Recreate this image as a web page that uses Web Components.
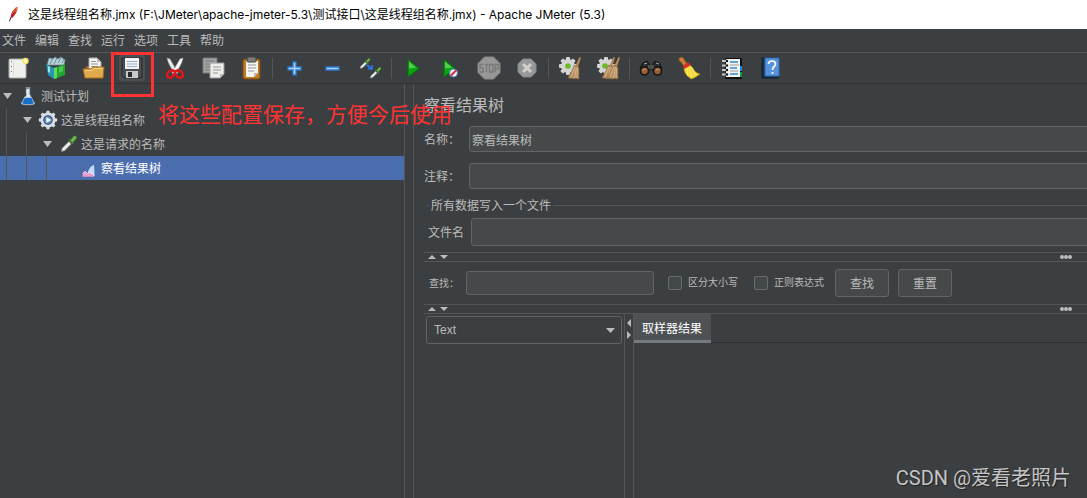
<!DOCTYPE html>
<html lang="zh-CN">
<head>
<meta charset="utf-8">
<title>Apache JMeter (5.3)</title>
<style>
html,body{margin:0;height:100%;overflow:hidden}
body{font:12px/16px "Liberation Sans","Noto Sans CJK SC",sans-serif;color:#bbb;background:#3c3f41}
</style>
</head>
<body>
<jm-app></jm-app>
<script>
const define=(name,html)=>customElements.define(name,class extends HTMLElement{
  connectedCallback(){
    if(this.shadowRoot)return;
    const root=this.attachShadow({mode:"open"});
    const t=document.createElement("template");
    t.innerHTML="<style>*{box-sizing:border-box}:host([hidden]){display:none}</style>"+(typeof html==="function"?html(this):html);
    root.append(t.content.cloneNode(true));
  }
});

const gear=(c,r,teeth)=>Array.from({length:teeth},(_,i)=>`<rect x="${c-2}" y="${c-r}" width="4" height="${r}" rx="1" transform="rotate(${i*360/teeth} ${c} ${c})"/>`).join("");
const broom=(x)=>`<g transform="translate(${x} 0)"><path d="M20.500 1l1.500.7-3 9-2.500-1z" fill="#b98a54"/><path d="M15.500 9l4 1.500c1 4 0 8 .5 12.500-4-1-8 .500-11-1.500 3-3 4-8 6.500-12.500z" fill="#b28d62" stroke="#8d6a40" stroke-width=".6"/><path d="M16 11l-4 10M17.500 11l-2 11M18.500 12l-.5 10" stroke="#dfc294" stroke-width=".8"/></g>`;
const dropper=`<path d="M4 21l1-4 8-8 3 3-8 8z" fill="#e4e6e2" stroke="#7c807a" stroke-width=".8"/><path d="M5.500 18.500l8-8" stroke="#fff"/><path d="M12 7l6 6 1.500-2-5.500-5.500z" fill="#3f7a2a"/><path d="M14.500 8l4-5c2-2 5 0 3.500 2.500l-4.500 5z" fill="#6fb552" stroke="#37711f" stroke-width=".7"/>`;
const ICONS={
 feather:`<path d="M5 23l3-7" stroke="#39303a" stroke-width="1.500"/><path d="M7 17c0-6 4-13 10-16 1 4-2 12-8 17z" fill="#d8232e"/><path d="M9 12c2-5 4-8 8-11 0 3-1 5-2 7z" fill="#e98a32"/><path d="M8 17L15 4" stroke="#7a1746"/>`,
 new:`<rect x="3" y="3" width="17" height="19" rx="1" fill="#efefed" stroke="#aaa"/><path d="M5.500 5v15" stroke="#777" stroke-dasharray="1 4"/><path d="M7.500 6v14" stroke="#d8d8d8"/><circle cx="19.500" cy="5" r="3.200" fill="#f3e66a"/><circle cx="19.500" cy="5" r="1.700" fill="#fffbd0"/>`,
 templates:`<path d="M3 9l2-7 4 1 2-2 3 2 3-2 4 3-1 5z" fill="#c3ced3" stroke="#668b99" stroke-width=".7"/><path d="M6 8l3-6M10 8l3-6M14 7l3-5M18 7l2-4" stroke="#4c9eb2"/><path d="M2 8l8 4v11l-6-4z" fill="#2297b3"/><path d="M4 10l2 1v6l-2-1z" fill="#9edfe9"/><path d="M10 12l11-4v11l-11 4z" fill="#22a632"/><path d="M10 12l3-1v11l-3 1z" fill="#62d85c"/><path d="M15 11l4-1v5l-4 2z" fill="#46ca4c"/>`,
 open:`<path d="M3 12l2-2h12l4 1v11H3z" fill="#99671d"/><path d="M7 13V2h8l4 4v8z" fill="#f3f3f1" stroke="#aaa"/><path d="M9 5.500h5M9 8h7M9 10.500h7" stroke="#999"/><path d="M15 2v4h4" fill="#bbb"/><path d="M1 13h8l2-2h11l-1 11H3z" fill="#e0ab4e" stroke="#a66d1c"/><path d="M3 14.500h7l2-2h9" stroke="#f8d489" fill="none"/>`,
 save:`<path d="M2 2h20v20H4l-2-2z" fill="#4a4c50" stroke="#24272a"/><rect x="5" y="2" width="14" height="11" fill="#f2f5f8"/><path d="M7 5.500h10M7 8h10M7 10.500h10" stroke="#99b3cb"/><rect x="6" y="15" width="12" height="7" fill="#c7c9ca"/><rect x="8" y="16" width="4" height="5" fill="#292c2e"/>`,
 cut:`<path d="M4 2l3 1 8 14-2 1C8 13 5 7 4 2z" fill="#e9e9e9" stroke="#999" stroke-width=".6"/><path d="M20 2l-3 1-8 14 2 1c5-5 8-11 9-16z" fill="#fafafa" stroke="#aaa" stroke-width=".6"/><path d="M11 15c-3-2-7 1-7 4s4 4 6 1l2-3zM13 15c3-2 7 1 7 4s-4 4-6 1l-2-3z" fill="none" stroke="#df171c" stroke-width="2.400"/>`,
 copy:`<path d="M2 2h14v15H2z" fill="#a3a5a5" stroke="#777"/><path d="M4 5h9M4 8h5M4 11h5M4 14h4" stroke="#777"/><path d="M9 7h14v11l-4 4H9z" fill="#ededeb" stroke="#999"/><path d="M12 11h8M12 14h8M12 17h5" stroke="#999"/><path d="M19 22v-4h4z" fill="#bbb"/>`,
 paste:`<rect x="4" y="3" width="17" height="20" rx="2" fill="#bd7a20" stroke="#7b4c10"/><path d="M7 5h12v12l-4 4H7z" fill="#f3f3f0"/><rect x="8" y="1" width="9" height="5" rx="1" fill="#7b7d79" stroke="#444"/><path d="M9 9h8M9 12h8M9 15h6" stroke="#999"/><path d="M15 21v-4h4z" fill="#bbb"/>`,
 plus:`<path d="M11 6h3v5h5v3h-5v5h-3v-5H6v-3h5z" fill="#a5d3fa" stroke="#2f78cb" stroke-width="1.300"/>`,
 minus:`<path d="M6 11h13v3H6z" fill="#a5d3fa" stroke="#2f78cb" stroke-width="1.300"/>`,
 toggle:`<g transform="translate(0 1) scale(.55)">${dropper}</g><g transform="translate(10 10) scale(.58)">${dropper}</g><path d="M9 9l5 4m0-4v4h-4" fill="none" stroke="#2876e8" stroke-width="1.700"/>`,
 play:`<path d="M7 3.500L18 12.500 7 21z" fill="#07a80e" stroke="#07730b"/><path d="M8 5.500l7 6-7 1z" fill="#75d66e" opacity=".75"/>`,
 playno:`<path d="M5 3.500L16 12.500 5 21z" fill="#07a80e" stroke="#07730b"/><path d="M6 5.500l7 6-7 1z" fill="#75d66e" opacity=".75"/><circle cx="14.500" cy="17" r="4" fill="#f4f6ff" stroke="#527abd"/><path d="M12 19.500l5-5" stroke="#df2220" stroke-width="1.800"/>`,
 stop:`<path d="M7.500 1h9L23 7.500v9L16.500 23h-9L1 16.500v-9z" fill="#979797" stroke="#878787"/><path d="M6 8.500H3v3.500h3v4H2.500M7.500 8.500h4M9.500 8.500V16M12.500 8.500h3.500V16h-3.500zM18 16.500v-8h3.500v4H18" fill="none" stroke="#787878" stroke-width="1.300"/>`,
 shutdown:`<path d="M8 3h8l5 5v8l-5 5H8l-5-5V8z" fill="#989898" stroke="#868686"/><path d="M8 8l8 8M16 8l-8 8" stroke="#d0d0d0" stroke-width="3"/>`,
 clear:`<g fill="#d4d4d4">${gear(10,9,8)}<circle cx="10" cy="10" r="7"/></g><circle cx="10" cy="10" r="2.800" fill="#6aba25"/>${broom(1)}`,
 clearall:`<g fill="#d4d4d4">${gear(10,9,8)}<circle cx="10" cy="10" r="7"/></g><circle cx="9" cy="10" r="2.800" fill="#6aba25"/>${broom(-3)}${broom(2)}`,
 find:`<path d="M4 7l4-2 3 4v5H3L1 12zM20 7l-4-2-3 4v5h8l2-2z" fill="#292929" stroke="#111"/><path d="M5 8l3-1M17 7l3 1" stroke="#aaa"/><rect x="9" y="9" width="6" height="4" fill="#505050"/><circle cx="5.500" cy="15" r="4" fill="#9b5d38" stroke="#171717" stroke-width="1.700"/><circle cx="18.500" cy="15" r="4" fill="#9b5d38" stroke="#171717" stroke-width="1.700"/><path d="M4 15c1-3 3-2 4-1M17 15c1-3 3-2 4-1" stroke="#d19b70" fill="none"/>`,
 broom:`<path d="M2 4c-1-3 4-4 5-1l3 5-3 2z" fill="#c68033" stroke="#8a501b" stroke-width=".7"/><path d="M12 8l4 4c1 3 3 5 7 6-3 2-5 4-9 5-4-3-7-6-7-11z" fill="#f3d935" stroke="#b28c12" stroke-width=".7"/><path d="M10 12l1 8M12 12l3 9M14 11l5 8" stroke="#fff48b" stroke-width=".8"/><path d="M6 10l5-4 3 3-7 4z" fill="#d92c28"/>`,
 list:`<rect x="5" y="2" width="17" height="21" rx="1" fill="#111"/><rect x="6" y="3" width="14" height="18" fill="#f2f4f5"/><path d="M2 5h5M2 9.500h5M2 14h5M2 18.500h5" stroke="#c6c6c6" stroke-width="2"/><circle cx="7" cy="5" r="1.200"/><circle cx="7" cy="9.500" r="1.200"/><circle cx="7" cy="14" r="1.200"/><circle cx="7" cy="18.500" r="1.200"/><path d="M10 6h8M10 12h7M10 18h8" stroke="#3486d0" stroke-width="1.400"/><path d="M10 9h9M10 15h8" stroke="#999"/><path d="M20 10h2v5h-2z" fill="#168ae6"/><path d="M20 16h2v5h-2z" fill="#0b9f31"/>`,
 help:`<path d="M4 2h16v20H4z" fill="#182f4c" stroke="#101e2d"/><path d="M7 2h14v18H7z" fill="#5593df" stroke="#336bad"/><path d="M10.500 8c0-4 7-4 7 0 0 3-3 2-3 6" fill="none" stroke="#fff" stroke-width="1.700"/><circle cx="14.500" cy="17" r="1.100" fill="#fff"/>`,
 flask:`<path d="M9 2h6M10 3v7L4 21c0 2 16 2 16 0l-6-11V3" fill="#dce7f1" stroke="#9cabba"/><path d="M8 14h8l3 7c-3 1-11 1-14 0z" fill="#156fcb"/><path d="M10.500 5v6L8 15" stroke="#fff"/>`,
 gear:`<g fill="#d8dde3">${gear(12,11,8)}<circle cx="12" cy="12" r="9"/></g><circle cx="12" cy="12" r="5" fill="#6289bc" stroke="#355985" stroke-width="1.500"/><path d="M10 8.500l6 3.500-6 3.500z" fill="#f1f5fa"/>`,
 dropper,
 chart:`<path d="M2 4v17" fill="none" stroke="#5f6488"/><path d="M12 21v-7l4-7 5-3 1 17z" fill="#bfdcff"/><path d="M4 22v-5l4-3 3 3 4-2 6 5v2z" fill="#ed9dcc"/><path d="M4 17l4-3 3 3 4-2 6 5" fill="none" stroke="#fff"/>`
};
define("jm-icon",h=>`<style>:host{display:inline-block;flex:none;width:24px;height:24px}svg{display:block;width:100%;height:100%}</style><svg viewBox="0 0 24 24" fill="#111" aria-hidden="true">${ICONS[h.getAttribute("name")]}</svg>`);

define("jm-title",`<style>:host{display:flex;align-items:center;gap:6px;height:29px;padding:0 6px;background:#fff;color:#000;font:12px/16px Inter,"Noto Sans CJK SC",sans-serif;white-space:nowrap}jm-icon{width:16px;height:18px;margin-bottom:2px}</style><jm-icon name="feather"></jm-icon><slot></slot>`);

define("jm-menu",`<style>:host{display:flex;align-items:center;gap:9px;height:24px;padding:0 2px;border-bottom:1px solid #555}button{border:0;padding:0;background:none;color:inherit;font:inherit}</style>${["文件","编辑","查找","运行","选项","工具","帮助"].map(x=>`<button>${x}</button>`).join("")}`);

const TOOLS=[["new","templates","open","save"],["cut","copy","paste"],["plus","minus","toggle"],["play","playno","stop","shutdown"],["clear","clearall"],["find","broom"],["list","help"]];
define("jm-tools",`<style>:host{display:flex;height:31px;margin-left:-1px;border-bottom:1px solid #323232}
button{width:38px;padding:0;border:0;background:none;display:grid;place-items:center}
i{width:5px;display:grid;place-items:center}i::before{content:"";width:1px;height:21px;background:#555}
.wrap{display:grid;place-items:center;width:26px;height:26px;border-radius:3px}.save{background:#4c5052}</style>
${TOOLS.map(g=>g.map(n=>`<button aria-label="${n}"><span class="wrap ${n}"><jm-icon name="${n}"></jm-icon></span></button>`).join("")).join("<i></i>")}`);

define("jm-node",h=>{const d=+h.getAttribute("depth");return`<style>:host{display:flex;align-items:center;height:24px;white-space:nowrap}:host([selected]){background:#4b6eaf;color:#fff}
.guide{width:20px;height:24px;padding-left:6px}.guide::before{content:"";display:block;width:1px;height:24px;background:#555}
.chev{width:18px;padding-left:3px}.chev svg{display:block}jm-icon{width:20px;height:20px;margin-right:3px}:host([depth="3"]) jm-icon{height:16px;margin-top:4px}.text{padding-top:2px}</style>
${'<span class="guide"></span>'.repeat(d)}<span class="chev">${h.hasAttribute("selected")?"":'<svg width="9" height="6"><path d="M0 0h9L4.500 6z" fill="#bbb"/></svg>'}</span><jm-icon name="${h.getAttribute("icon")}"></jm-icon><span class="text"><slot></slot></span>`});

define("jm-field",h=>`<style>:host{display:flex;align-items:center}label{flex:none;width:var(--label,45px);padding-top:2px;white-space:nowrap}
input{flex:1;min-width:0;height:var(--h,26px);padding:0 2px;border:1px solid #646464;border-radius:3px;background:#45494a;color:#bbb;font:inherit;outline:0}</style>
<label for="f">${h.getAttribute("label")}</label><input id="f" value="${h.getAttribute("value")||""}">`);

define("jm-check",`<style>:host{display:block}label{display:flex;align-items:center;gap:6px;white-space:nowrap;font-size:10px}input{appearance:none;width:14px;height:14px;margin:0;border:1px solid #6b6b6b;border-radius:2px;background:#43494a}</style><label><input type="checkbox"><slot></slot></label>`);

define("jm-button",`<style>:host{display:block}button{width:54px;height:28px;padding:2px 0 0;border:1px solid #646464;border-radius:3px;background:#45494a;color:#bbb;font:inherit}</style><button><slot></slot></button>`);

define("jm-split",`<style>:host{display:flex;align-items:center;justify-content:space-between;height:10px;padding:0 14px 0 4px;border:solid #555;border-width:1px 0}
div{display:flex;gap:4px}button{border:0;padding:0;background:none;width:8px;height:6px}svg{display:block}</style>
<div><button aria-label="up"><svg width="8" height="6"><path d="M0 5h8L4 1z" fill="#bbb"/></svg></button><button aria-label="down"><svg width="8" height="6"><path d="M0 1h8L4 5z" fill="#bbb"/></svg></button></div>
<svg width="14" height="6" fill="#bbb"><circle cx="3" cy="3" r="2"/><circle cx="7" cy="3" r="2"/><circle cx="11" cy="3" r="2"/></svg>`);

define("jm-group",`<style>:host{display:block}header{display:flex;align-items:center;gap:2px;height:16px;white-space:nowrap}header::before,header::after{content:"";height:1px;background:#555;width:3px}header::after{flex:1}slot[name]{display:block;padding-top:2px}</style><header><slot name="legend"></slot></header><slot></slot>`);

define("jm-results",`<style>:host{display:flex;flex:1;min-height:0}
.left{width:200px;padding:2px 2px;flex:none}.combo{display:grid;align-items:center}.combo>*{grid-area:1/1}
select{appearance:none;width:100%;height:28px;padding:0 7px;border:1px solid #646464;border-radius:3px;background:#3c3f41;color:#bbb;font:inherit}
.combo svg{justify-self:end;margin-right:7px;pointer-events:none}
.bar{width:10px;flex:none;border:solid #555;border-width:0 1px;padding-top:5px;display:flex;flex-direction:column;gap:4px;align-items:center}.bar button{padding:0;border:0;background:none;width:4px;height:8px}.bar svg{display:block}
.right{flex:1}.tabs{height:29px;border-bottom:1px solid #323232}.tab{height:29px;padding:3px 9px 0 8px;border:0;border-bottom:3px solid #747a80;background:#4e5254;color:#fff;font:inherit}</style>
<div class="left"><div class="combo"><select aria-label="Text"><option>Text</option></select><svg width="9" height="5"><path d="M0 0h9L4.500 5z" fill="#bbb"/></svg></div></div>
<div class="bar"><button aria-label="left"><svg width="4" height="8"><path d="M4 0v8L0 4z" fill="#bbb"/></svg></button><button aria-label="right"><svg width="4" height="8"><path d="M0 0v8l4-4z" fill="#bbb"/></svg></button></div>
<div class="right"><div class="tabs"><button class="tab">取样器结果</button></div></div>`);

define("jm-editor",`<style>:host{display:flex;flex-direction:column;min-width:0;padding-left:10px;overflow:hidden}
h1{margin:10px 0 9px;font-size:16px;line-height:23px;font-weight:400}
.fields{display:grid;gap:11px;margin-right:-4px}jm-group{margin:8px -4px 6px 2px}.file{--label:43px;--h:28px;margin-top:5px;padding-left:2px}
.search{display:flex;align-items:center;height:42px;padding-left:5px}.search jm-field{width:225px;--label:37px;--h:24px;font-size:10px;margin-right:14px}
jm-check+jm-check{margin:0 11px 0 16px}jm-button+jm-button{margin-left:9px}</style>
<h1>察看结果树</h1><div class="fields"><jm-field label="名称：" value="察看结果树"></jm-field><jm-field label="注释："></jm-field></div>
<jm-group><span slot="legend">所有数据写入一个文件</span><jm-field class="file" label="文件名"></jm-field></jm-group>
<jm-split></jm-split>
<div class="search"><jm-field label="查找："></jm-field><jm-check>区分大小写</jm-check><jm-check>正则表达式</jm-check><jm-button>查找</jm-button><jm-button>重置</jm-button></div>
<jm-split></jm-split><jm-results></jm-results>`);

define("jm-app",`<style>:host{position:relative;display:flex;flex-direction:column;height:100vh;overflow:hidden}
main{flex:1;min-height:0;display:grid;grid-template-columns:404px 10px minmax(0,1fr)}.sash{border:solid #555;border-width:0 1px}
.box{position:absolute;left:111px;top:52px;width:43px;height:45px;border:3px solid #f33}
.note{position:absolute;left:158px;top:101px;margin:0;color:#f33;font-size:21px;line-height:28px;white-space:nowrap}
.mark{position:absolute;right:16px;bottom:6px;margin:0;color:#c4c5c6;font:20px/28px Roboto,"Noto Sans CJK SC",sans-serif;text-shadow:1px 1px 1px #222;white-space:nowrap}</style>
<jm-title>这是线程组名称.jmx (F:\\JMeter\\apache-jmeter-5.3\\测试接口\\这是线程组名称.jmx) - Apache JMeter (5.3)</jm-title>
<jm-menu></jm-menu><jm-tools></jm-tools>
<main><nav><jm-node depth="0" icon="flask">测试计划</jm-node><jm-node depth="1" icon="gear">这是线程组名称</jm-node><jm-node depth="2" icon="dropper">这是请求的名称</jm-node><jm-node depth="3" icon="chart" selected>察看结果树</jm-node></nav><div class="sash"></div><jm-editor></jm-editor></main>
<div class="box"></div><p class="note">将这些配置保存，方便今后使用</p><p class="mark">CSDN @爱看老照片</p>`);
</script>
</body>
</html>
